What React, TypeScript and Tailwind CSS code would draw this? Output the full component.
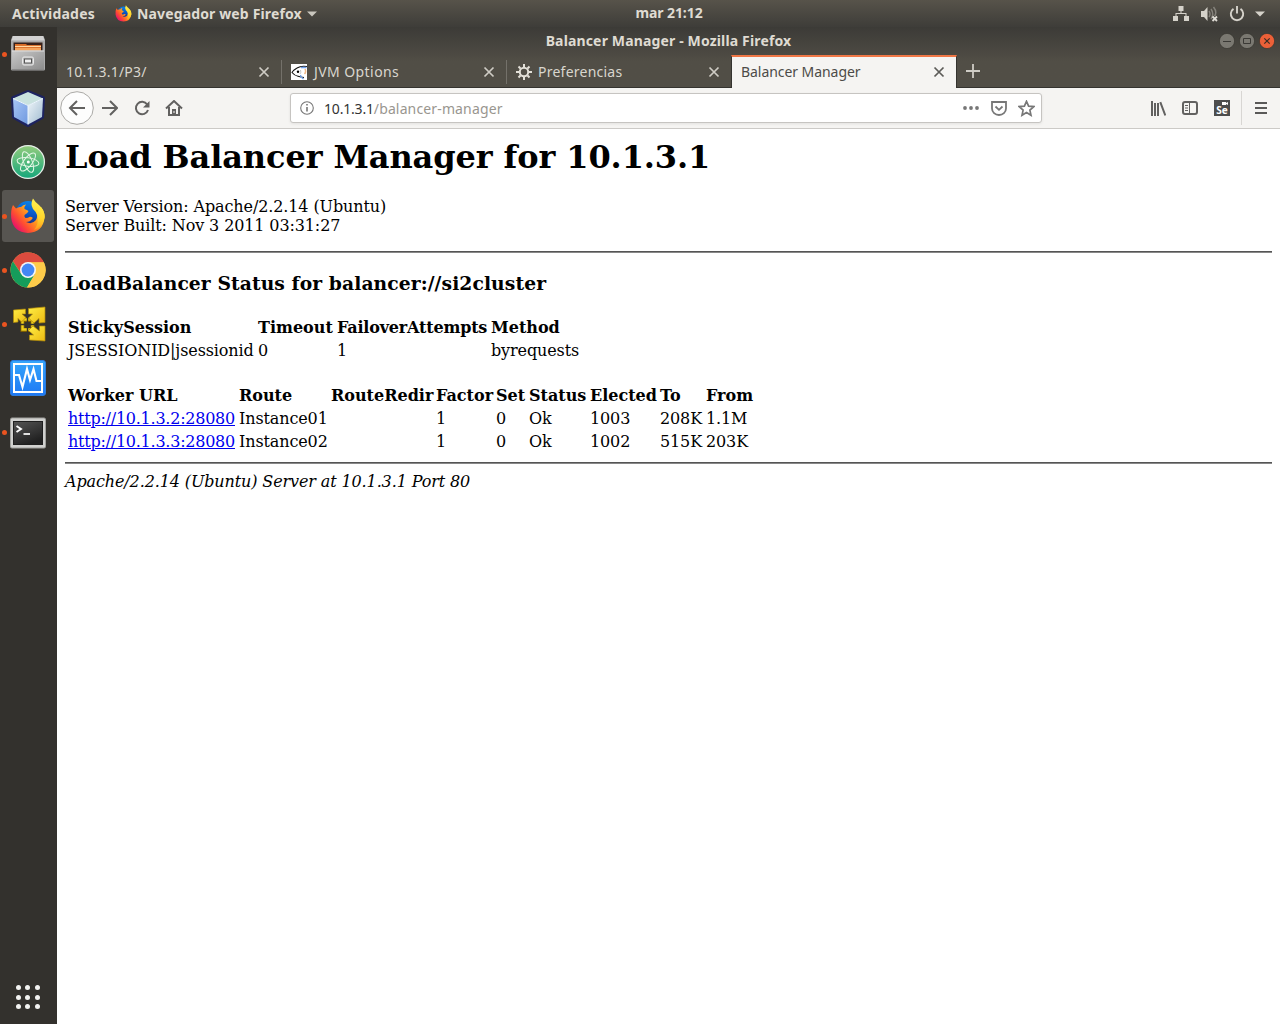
import React, { type ReactNode } from "react";

const UI = "font-['Noto_Sans','Open_Sans',sans-serif]";

function FirefoxLogo({ size, id }: { size: number; id: string }) {
  return (
    <svg width={size} height={size} viewBox="0 0 36 36">
      <defs>
        <linearGradient id={id + "a"} x1="0.85" y1="0.2" x2="0.1" y2="0.75">
          <stop offset="0" stopColor="#ffe03a" />
          <stop offset="0.35" stopColor="#ff9d1e" />
          <stop offset="0.7" stopColor="#ff5030" />
          <stop offset="1" stopColor="#ea1566" />
        </linearGradient>
        <linearGradient id={id + "b"} x1="0.6" y1="0" x2="0.4" y2="1">
          <stop offset="0" stopColor="#0a84ea" />
          <stop offset="0.5" stopColor="#0a57c6" />
          <stop offset="1" stopColor="#20246f" />
        </linearGradient>
        <linearGradient id={id + "c"} x1="0.5" y1="0" x2="0.4" y2="1">
          <stop offset="0" stopColor="#fff352" />
          <stop offset="0.6" stopColor="#ffd52c" />
          <stop offset="1" stopColor="#ff9c1a" />
        </linearGradient>
      </defs>
      <circle cx="18" cy="15.500" r="12.500" fill={`url(#${id}b)`} />
      <path
        d="M3 7 L6 10.500 Q8.500 8.500 11 9 Q13 6.500 16 6.500 Q14 8.500 14.500 11 Q17 12 18.500 13 Q18 15 14.500 17 Q14 19 15.500 20 Q18 20 20 18.800 Q23 19 22.500 20.500 Q20 24 16 24 Q22 27 26 22 Q28.500 17 26 12 L31 9 Q35 14 34.500 20 Q33 34 18 35 Q3 34 1.200 20 Q0.500 12 3 7Z"
        fill={`url(#${id}a)`}
      />
      <path
        d="M23 0.500 Q25 4 29 7 Q34.500 12 34.800 19 Q33 29 24 32 Q29 26 27.500 18 Q26.500 14 23 11 Q20 6 23 0.500Z"
        fill={`url(#${id}c)`}
      />
    </svg>
  );
}

function FilesIcon() {
  return (
    <svg width="36" height="36" viewBox="0 0 36 36" className="-mt-[3px]">
      <defs>
        <linearGradient id="cab" x1="0" y1="0" x2="1" y2="1">
          <stop offset="0" stopColor="#c9c9c9" />
          <stop offset="1" stopColor="#8d8d8d" />
        </linearGradient>
      </defs>
      <path d="M2.500 1h31l1.500 4v29a1.500 1.500 0 0 1-1.500 1.500h-31A1.500 1.500 0 0 1 1 34V5Z" fill="#aaaaaa" />
      <path d="M3 1h30l1.500 4.500h-33Z" fill="#d2d2d2" />
      <rect x="3.500" y="7.500" width="29" height="9" fill="#37201a" />
      <path d="M5 9h11l1 1h14v6H5Z" fill="#d86b25" />
      <path d="M5 11.500h26" stroke="#ffd6a1" strokeWidth="1.200" />
      <path d="M5 13h26v3H5Z" fill="#f5a45c" />
      <path d="M2 15.500h32v18.500H2Z" fill="url(#cab)" />
      <path d="M2 16h32" stroke="#dedede" />
      <path d="M2 35h32" stroke="#686868" />
      <rect x="12.500" y="22" width="11" height="8" rx="1.500" fill="#b8b8b8" stroke="#e9e9e9" />
      <rect x="14.500" y="24" width="7" height="4" fill="#efefef" stroke="#555" />
    </svg>
  );
}

function CubeIcon() {
  return (
    <svg width="38" height="38" viewBox="0 0 38 38">
      <defs>
        <linearGradient id="cubeL" x1="0" y1="0" x2="1" y2="1">
          <stop offset="0" stopColor="#a8c6f7" />
          <stop offset="1" stopColor="#6f99df" />
        </linearGradient>
        <linearGradient id="cubeR" x1="0" y1="0" x2="1" y2="1">
          <stop offset="0" stopColor="#f0f6fa" />
          <stop offset="1" stopColor="#9fbbd0" />
        </linearGradient>
      </defs>
      <path d="M19 3 34 9 33 28 19 36 5 28 4 9Z" fill="#1d2360" stroke="#1d2360" strokeWidth="4" strokeLinejoin="round" />
      <path d="M19 3 34 9.500 19 16.500 4 9.500Z" fill="#c9e2df" />
      <path d="M4 9.500 19 16.500V35.500L5 28Z" fill="url(#cubeL)" />
      <path d="M34 9.500 19 16.500V35.500L33 28Z" fill="url(#cubeR)" />
      <path d="M4 9.500 19 16.500 34 9.500M19 16.500V35.500" fill="none" stroke="#eef8ff" strokeWidth="1" />
    </svg>
  );
}

function AtomIcon() {
  return (
    <svg width="36" height="36" viewBox="0 0 36 36">
      <defs>
        <linearGradient id="atomg" x1="0" y1="0" x2="0" y2="1">
          <stop offset="0" stopColor="#92cc7d" />
          <stop offset="1" stopColor="#16a77b" />
        </linearGradient>
      </defs>
      <circle cx="18" cy="18" r="16.400" fill="url(#atomg)" stroke="#e6eee8" strokeWidth="1.300" />
      <g fill="none" stroke="#e3f6e5" strokeWidth="1">
        <ellipse cx="18" cy="18" rx="4.200" ry="11" transform="rotate(-22 18 18)" />
        <ellipse cx="18" cy="18" rx="4.200" ry="11" transform="rotate(38 18 18)" />
        <ellipse cx="18" cy="18" rx="4.200" ry="11" transform="rotate(98 18 18)" />
      </g>
      <circle cx="18.300" cy="18" r="1.500" fill="#fff" />
    </svg>
  );
}

function ChromeIcon() {
  return (
    <svg width="36" height="36" viewBox="0 0 36 36">
      <circle cx="18" cy="18" r="17.500" fill="#ffcd46" />
      <path d="M2.850 9.250A17.500 17.500 0 0 1 33.900 10.400H18L11.500 22Z" fill="#dc4b3e" />
      <path d="M2.850 9.250A17.500 17.500 0 0 0 17 35.500L25 22 18 26 11.300 22Z" fill="#159c5b" />
      <path d="M18 10.300h15.850A17.500 17.500 0 0 1 17 35.500L25 22Z" fill="#fdcb4a" />
      <circle cx="18" cy="18" r="8" fill="#f4f5f7" />
      <circle cx="18" cy="18" r="6.400" fill="#4387f4" />
    </svg>
  );
}

function ArrowsIcon() {
  return (
    <svg width="36" height="36" viewBox="0 0 36 36">
      <defs>
        <linearGradient id="arr" x1="0" y1="0" x2="1" y2="1">
          <stop offset="0" stopColor="#ffee44" />
          <stop offset="1" stopColor="#ecb912" />
        </linearGradient>
      </defs>
      <path d="M12.500 14h10v10h-10Z" fill="none" stroke="#7d5e06" strokeWidth="4" />
      <path d="M12.500 13.500h10v10h-10Z" fill="none" stroke="#f0cf1c" strokeWidth="2.400" />
      <path d="M17.500 11v5M17.500 21v5M9 18.500h6M20 18.500h6" stroke="#34302a" strokeWidth="1.400" />
      <g stroke="#b08a08" strokeWidth="0.700" fill="url(#arr)" strokeLinejoin="round">
        <path d="M18.500 2.500 35 1V16.500L29 17V12.500L24 17 18.500 12 22.500 8H18.500Z" />
        <path d="M35 20V35L19.500 34V29H23.500L18.500 24.500 23 20 29.500 25V20Z" />
        <path d="M15.500 3 3.500 4V16.500L8 16V12.500L11.500 16 16 11.500 12 8H15.500Z" />
      </g>
    </svg>
  );
}

function MonitorIcon() {
  return (
    <svg width="36" height="36" viewBox="0 0 36 36">
      <defs>
        <linearGradient id="mon" x1="0" y1="0" x2="0" y2="1">
          <stop offset="0" stopColor="#36a6fb" />
          <stop offset="1" stopColor="#1e78f4" />
        </linearGradient>
      </defs>
      <rect x="0.500" y="0.500" width="35" height="35" rx="2.500" fill="url(#mon)" stroke="#2c7bdd" />
      <rect x="4" y="4" width="28" height="28" fill="none" stroke="#fff" strokeWidth="2" />
      <path d="M4 15h5l3.500 12 4.500-18 3 11 3.500-11 3 12h5.500" fill="none" stroke="#fff" strokeWidth="2.100" />
    </svg>
  );
}

function TerminalIcon() {
  return (
    <svg width="36" height="32" viewBox="0 0 36 32" className="mt-[2px]">
      <defs>
        <linearGradient id="term" x1="0" y1="0" x2="0.500" y2="1">
          <stop offset="0" stopColor="#555" />
          <stop offset="1" stopColor="#202020" />
        </linearGradient>
      </defs>
      <rect x="0.500" y="1" width="35" height="30" rx="1.500" fill="#d0d0ce" stroke="#a1a19e" />
      <rect x="3.500" y="4.500" width="29" height="23" fill="url(#term)" stroke="#1e1e1e" />
      <path d="m6.500 9 4.500 3-4.500 3" fill="none" stroke="#fff" strokeWidth="1.900" />
      <path d="M13.500 17h6.500" stroke="#fff" strokeWidth="1.700" />
    </svg>
  );
}

function DockItem({ children, running, active }: { children: ReactNode; running?: boolean; active?: boolean }) {
  return (
    <div className={"relative flex h-[52px] w-[52px] shrink-0 items-center justify-center rounded-[3px] " + (active ? "bg-[#575551]" : "")}>
      {running && <span className="absolute left-0 top-6 h-[5px] w-[5px] rounded-full bg-[#e95420]" />}
      {children}
    </div>
  );
}

function Close({ dark }: { dark?: boolean }) {
  return (
    <svg width="12" height="12" viewBox="0 0 12 12" className="shrink-0">
      <path d="m1.500 1.500 9 9m0-9-9 9" stroke={dark ? "#5c5b58" : "#cfccc5"} strokeWidth="1.700" />
    </svg>
  );
}

function Tab({ title, icon, tracking, first }: { title: string; icon?: ReactNode; tracking: string; first?: boolean }) {
  return (
    <div className={"flex h-[31px] shrink-0 items-center " + (first ? "w-[224px]" : "w-[225px]")}>
      <span className={"h-6 w-px shrink-0 " + (first ? "" : "bg-[#74716a]")} />
      <div className={"flex flex-1 items-center " + (first ? "pl-2" : "pl-[9px]")}>
        {icon}
        <span className={"whitespace-nowrap text-[14px] leading-5 text-[#d9d6ce] " + tracking}>{title}</span>
      </div>
      <span className="mr-[11px] flex"><Close /></span>
    </div>
  );
}

function TopBar() {
  return (
    <header className="grid h-[27px] grid-cols-3 items-center bg-gradient-to-b from-[#57534a] to-[#3e3d39] text-[14px] font-bold text-[#dfdbd2]">
      <div className="flex h-full items-center pl-3">
        <span className="-mt-px w-[103px] whitespace-nowrap tracking-[0.19px]">Actividades</span>
        <FirefoxLogo size={17} id="fs" />
        <span className="-mt-px ml-[5px] w-[166px] whitespace-nowrap tracking-[0.14px]">Navegador web Firefox</span>
        <svg width="10" height="6" viewBox="0 0 10 6" className="ml-1"><path d="M0 .5h10L5 5.500Z" fill="#c9c6be" /></svg>
      </div>
      <span className="-mt-[3px] ml-[58px] w-[68px] justify-self-center whitespace-nowrap text-center tracking-[-0.08px]">mar 21:12</span>
      <div className="flex items-center justify-end pr-[15px]">
        <svg width="16" height="16" viewBox="0 0 16 16" fill="#d5d2ca"><path d="M5.500 0h5v5H8.500v2h5v3H16v5h-5v-5h1.500V8H3.500v2H5v5H0v-5h2.500V7h5V5h-2Z" /></svg>
        <svg width="17" height="16" viewBox="0 0 17 16" className="ml-3">
          <path d="M0 5h3l3.500-4v14L3 11H0Z" fill="#d5d2ca" />
          <path d="M8 5q2 3 0 6M10 3q3.500 5 0 10M12.500 1q4 5 1 9" fill="none" stroke="#85827b" strokeWidth="1.500" />
          <path d="m11.500 10.500 4.500 4.500m0-4.500L11.500 15" stroke="#e0ddd6" strokeWidth="1.800" />
        </svg>
        <svg width="16" height="16" viewBox="0 0 16 16" className="ml-[11px]" fill="none" stroke="#d5d2ca" strokeWidth="1.900">
          <path d="M4.500 2.900a6.200 6.200 0 1 0 7 0M8 0v7.500" />
        </svg>
        <svg width="10" height="6" viewBox="0 0 10 6" className="ml-[10px]"><path d="M0 .5h10L5 5.500Z" fill="#d5d2ca" /></svg>
      </div>
    </header>
  );
}

function TitleBar() {
  return (
    <div className="grid h-[28px] grid-cols-[1fr_auto_1fr] items-center bg-gradient-to-b from-[#3c3b37] to-[#4d4a43]">
      <span />
      <span className="-mt-[2px] w-[247px] whitespace-nowrap text-center text-[14px] font-bold tracking-[0.15px] text-[#dfdbd2]">Balancer Manager - Mozilla Firefox</span>
      <div className="flex justify-end gap-1 pr-[5px]">
        {["min", "max", "close"].map((k) => (
          <svg key={k} width="16" height="16" viewBox="0 0 16 16">
            <circle cx="8" cy="8" r="7.600" fill={k === "close" ? "#ec6038" : "#7a7871"} stroke="#383631" strokeWidth="0.700" />
            {k === "min" && <path d="M4 8.500h8" stroke="#3a3935" />}
            {k === "max" && <path d="M4.500 5.500h7v5h-7Z" fill="none" stroke="#3a3935" />}
            {k === "close" && <path d="m5.300 5.300 5.400 5.400m0-5.400-5.400 5.400" stroke="#3a2d25" strokeWidth="1.200" />}
          </svg>
        ))}
      </div>
    </div>
  );
}

function TabStrip() {
  return (
    <div className="flex h-[33px] border-b border-[#34332f] bg-gradient-to-b from-[#4d4a43] to-[#514e46] to-20%">
      <div className="flex pt-px">
        <Tab title="10.1.3.1/P3/" tracking="tracking-[0.2px]" first />
        <Tab
          title="JVM Options"
          tracking="ml-[7px] tracking-[0.42px]"
          icon={
            <svg width="16" height="16" viewBox="0 0 16 16" className="shrink-0">
              <path d="M0 0h16v16H0Z" fill="#fff" />
              <path d="M16 2.500Q10 1.500 6 4 2.500 6 1 8.500q2.500 3 6 3.800 3 1 6 1.200" fill="none" stroke="#111" strokeWidth="1.100" />
              <path d="M9.500 11 10 13l2.500 2M10 3.500h5.500" fill="none" stroke="#6fa0ea" strokeWidth="1.300" />
              <path d="M14 5q1.500 3-.5 5" fill="none" stroke="#f0b785" strokeWidth="1.500" />
              <path d="M9.500 6q1 2.500-.5 4" fill="none" stroke="#b5b5b5" strokeWidth="0.800" />
              <circle cx="7" cy="7.800" r="1.200" />
            </svg>
          }
        />
        <Tab
          title="Preferencias"
          tracking="ml-[6px] tracking-[0.24px]"
          icon={
            <svg width="16" height="16" viewBox="0 0 16 16" className="shrink-0" fill="none" stroke="#e3e0d8" strokeWidth="2">
              <circle cx="8" cy="8" r="4.200" />
              <path d="M8 0v3M8 13v3M0 8h3M13 8h3M2.500 2.500l2 2M11.500 11.500l2 2M13.500 2.500l-2 2M4.500 11.500l-2 2" />
            </svg>
          }
        />
      </div>
      <div className="-mb-px flex w-[226px] items-center justify-between border-x border-t-2 border-x-[#34332f] border-t-[#f07746] bg-[#f5f4f2] pl-[9px] pr-[11px]">
        <span className="-mt-[2px] whitespace-nowrap text-[14px] leading-5 tracking-[-0.06px] text-[#4c4b48]">Balancer Manager</span>
        <span className="-mt-px flex"><Close dark /></span>
      </div>
      <svg width="14" height="14" viewBox="0 0 14 14" className="ml-[9px] mt-[9px]"><path d="M7 0v14M0 7h14" stroke="#cfccc5" strokeWidth="1.800" /></svg>
    </div>
  );
}

function Toolbar() {
  return (
    <div className="flex h-[41px] items-center border-b border-[#cccac7] bg-[#f5f4f2] pl-[3px]">
      <svg width="34" height="34" viewBox="0 0 34 34" fill="none" className="shrink-0">
        <circle cx="17" cy="17" r="16.300" fill="#fdfdfd" stroke="#aaa9a6" />
        <path d="M25 17H10m7-7-7 7 7 7" stroke="#626160" strokeWidth="2" />
      </svg>
      <svg width="16" height="16" viewBox="0 0 16 16" className="ml-2 shrink-0" fill="none" stroke="#626160" strokeWidth="2"><path d="M0 8h15M8 1l7 7-7 7" /></svg>
      <svg width="16" height="16" viewBox="0 0 16 16" className="ml-4 shrink-0" fill="none" stroke="#626160" strokeWidth="2"><path d="M13.200 4.500A6.200 6.200 0 1 0 14 10" /><path d="M15.500 1v6.500H9Z" fill="#626160" stroke="none" /></svg>
      <svg width="18" height="16" viewBox="0 0 18 16" className="ml-[15px] shrink-0" fill="none" stroke="#626160" strokeWidth="2"><path d="M1 8.500 9 1l8 7.500M4 7v8h10V7" /><path d="M7 9h4v6H7Z" fill="#626160" stroke="none" /><path d="M9 11v2" stroke="#f5f4f2" strokeWidth="1" /></svg>
      <div className="ml-[107px] flex h-[30px] w-[752px] shrink-0 items-center rounded-[3px] border border-[#c6c4c1] bg-white pl-[9px] pr-[6px] shadow-[0_1px_3px_rgba(0,0,0,0.08)]">
        <svg width="14" height="14" viewBox="0 0 14 14" fill="none" stroke="#777" strokeWidth="1.100"><circle cx="7" cy="7" r="6.300" /><path d="M7 6v4.500M7 3v1.600" strokeWidth="1.600" /></svg>
        <span className="ml-[10px] whitespace-nowrap text-[14px] tracking-[-0.19px] text-[#333]">10.1.3.1<span className="tracking-[0.14px] text-[#99968f]">/balancer-manager</span></span>
        <svg width="16" height="4" viewBox="0 0 16 4" className="ml-auto" fill="#777"><circle cx="2" cy="2" r="1.900" /><circle cx="8" cy="2" r="1.900" /><circle cx="14" cy="2" r="1.900" /></svg>
        <svg width="16" height="15" viewBox="0 0 16 15" className="ml-3" fill="none" stroke="#777" strokeWidth="1.800"><path d="M1 1h14v6.500a7 6.500 0 0 1-14 0Z" /><path d="m4.500 5.500 3.500 3.300 3.500-3.300" /></svg>
        <svg width="17" height="17" viewBox="0 0 17 17" className="ml-[11px]" fill="none" stroke="#777" strokeWidth="1.700"><path d="m8.500 1.300 2.100 4.800 5.200.5-3.900 3.500 1.100 5.200-4.500-2.700L4 15.300l1.100-5.200L1.200 6.600l5.200-.5Z" /></svg>
      </div>
      <div className="ml-auto flex items-center">
        <svg width="16" height="15" viewBox="0 0 16 15" fill="none" stroke="#626160" strokeWidth="2"><path d="M2 0v15M5 2v13M8 2v13M10.300 1.200l5 13.300" /></svg>
        <svg width="16" height="14" viewBox="0 0 16 14" className="ml-4" fill="none" stroke="#626160" strokeWidth="2"><rect x="1" y="1" width="14" height="12" rx="2" /><path d="M7.500 1v12" strokeWidth="1" /><path d="M3 4.500h3M3 7h3M3 9.500h3" strokeWidth="1" /></svg>
        <div className="ml-4 flex h-4 w-4 flex-col bg-[#4d4d4d]">
          <svg width="16" height="6" viewBox="0 0 16 6" className="shrink-0"><path d="M8 2h4v1l2-1v3l-2-1v1H8Z" fill="#fff" /></svg>
          <span className="text-center text-[10px] font-bold leading-[9px] text-white">Se</span>
        </div>
        <span className="ml-[11px] h-[34px] w-px bg-[#d8d6d3]" />
        <svg width="12" height="12" viewBox="0 0 12 12" className="ml-[13px] mr-[13px]" stroke="#5a5958" strokeWidth="2"><path d="M0 1h12M0 6h12M0 11h12" /></svg>
      </div>
    </div>
  );
}

const sticky = {
  cols: [190, 79, 154, 91],
  head: ["StickySession", "Timeout", "FailoverAttempts", "Method"],
  rows: [["JSESSIONID|jsessionid", "0", "1", "byrequests"]],
};
const workers = {
  cols: [171, 92, 105, 60, 33, 61, 70, 46, 51],
  head: ["Worker URL", "Route", "RouteRedir", "Factor", "Set", "Status", "Elected", "To", "From"],
  rows: [
    ["http://10.1.3.2:28080", "Instance01", "", "1", "0", "Ok", "1003", "208K", "1.1M"],
    ["http://10.1.3.3:28080", "Instance02", "", "1", "0", "Ok", "1002", "515K", "203K"],
  ],
};

function DataTable({ data, className }: { data: typeof sticky; className: string }) {
  return (
    <table className={"table-fixed border-collapse leading-[19px] " + className} style={{ width: data.cols.reduce((a, b) => a + b, 0) }}>
      <colgroup>{data.cols.map((w, i) => <col key={i} style={{ width: w }} />)}</colgroup>
      <thead>
        <tr className="h-[23px]">
          {data.head.map((h) => (
            <th key={h} className={"whitespace-nowrap p-0 text-left font-bold " + (h === "FailoverAttempts" ? "tracking-[-0.19px]" : "")}>{h}</th>
          ))}
        </tr>
      </thead>
      <tbody>
        {data.rows.map((r, i) => (
          <tr key={i} className="h-[23px]">
            {r.map((c, j) => (
              <td key={j} className="whitespace-nowrap p-0 tracking-[-0.12px]">
                {c.startsWith("http") ? <a href="#" className="tracking-[-0.24px] text-[#0000ee] underline">{c}</a> : c}
              </td>
            ))}
          </tr>
        ))}
      </tbody>
    </table>
  );
}

function Rule({ className }: { className: string }) {
  return <hr className={"h-[2px] border-0 border-t border-t-[#555] bg-[#888] " + className} />;
}

export default function App() {
  return (
    <div className={"flex h-[1024px] w-[1280px] flex-col overflow-hidden " + UI}>
      <TopBar />
      <div className="flex min-h-0 flex-1">
        <nav className="flex w-[57px] shrink-0 flex-col gap-[2px] bg-[#33312d] pl-[2px] pt-px">
          <DockItem running><FilesIcon /></DockItem>
          <DockItem><CubeIcon /></DockItem>
          <DockItem><AtomIcon /></DockItem>
          <DockItem running active><FirefoxLogo size={36} id="fl" /></DockItem>
          <DockItem running><ChromeIcon /></DockItem>
          <DockItem running><ArrowsIcon /></DockItem>
          <DockItem><MonitorIcon /></DockItem>
          <DockItem running><TerminalIcon /></DockItem>
          <div className="mb-[15px] ml-[13.5px] mt-auto grid w-6 grid-cols-3 gap-[4.5px]">
            {Array.from({ length: 9 }, (_, i) => <span key={i} className="h-[5px] w-[5px] rounded-full bg-[#f3f3f1]" />)}
          </div>
        </nav>
        <div className="flex min-w-0 flex-1 flex-col">
          <TitleBar />
          <TabStrip />
          <Toolbar />
          <main className="flex-1 bg-white px-2 pt-[9px] font-['DejaVu_Serif',serif] text-[16px] leading-[19px] text-black">
            <h1 className="text-[32px] font-bold leading-[38px] tracking-[-0.1px]">Load Balancer Manager for 10.1.3.1</h1>
            <p className="mt-[21px] tracking-[-0.11px]">Server Version: Apache/2.2.14 (Ubuntu)</p>
            <p className="tracking-[-0.12px]">Server Built: Nov 3 2011 03:31:27</p>
            <Rule className="mt-4" />
            <h3 className="mt-[19px] text-[18.72px] font-bold leading-[22px] tracking-[0.09px]">LoadBalancer Status for balancer://si2cluster</h3>
            <DataTable data={sticky} className="ml-[3px] mt-[22px]" />
            <DataTable data={workers} className="ml-[3px] mt-[22px]" />
            <Rule className="mt-[9px]" />
            <address className="mt-2 italic tracking-[-0.12px]">Apache/2.2.14 (Ubuntu) Server at 10.1.3.1 Port 80</address>
          </main>
        </div>
      </div>
    </div>
  );
}
